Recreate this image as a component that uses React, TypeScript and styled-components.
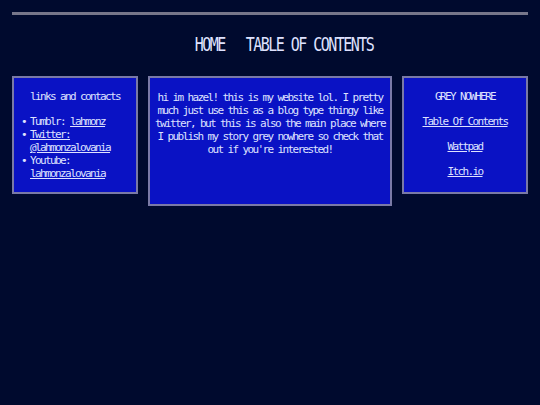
import styled, { createGlobalStyle } from "styled-components";

// 전체 페이지 기본 스타일
const GlobalStyle = createGlobalStyle`
  html, body {
    margin: 0;
    padding: 0;
    background-color: #000a2e;
  }
  body {
    font-family: "DejaVu Sans Mono", "Liberation Mono", monospace;
    color: #dfe2ff;
  }
  a {
    color: #dfe2ff;
  }
`;

const contacts = [
  { label: "Tumblr:", link: "lahmonz", inline: true },
  { label: "", link: "Twitter: @lahmonzalovania", inline: false },
  { label: "Youtube:", link: "lahmonzalovania", inline: false },
];

const storyLinks = ["Table Of Contents", "Wattpad", "Itch.io"];

const App = () => {
  return (
    <Page>
      <GlobalStyle />
      <TopBar />
      <Nav>
        <NavLink href="#">HOME</NavLink>
        <NavLink href="#">TABLE OF CONTENTS</NavLink>
      </Nav>
      <Columns>
        <SideBox>
          <BoxTitle>links and contacts</BoxTitle>
          <ContactList>
            {contacts.map((c, i) => (
              <ContactItem key={i}>
                {c.label && (c.inline ? `${c.label} ` : c.label)}
                {c.label && !c.inline && <br />}
                <TextLink href="#">{c.link}</TextLink>
              </ContactItem>
            ))}
          </ContactList>
        </SideBox>
        <MainBox>
          <Intro>
            hi im hazel! this is my website lol. I pretty much just use this as
            a blog type thingy like twitter, but this is also the main place
            where I publish my story grey nowhere so check that out if you're
            interested!
          </Intro>
        </MainBox>
        <SideBox>
          <BoxTitle>GREY NOWHERE</BoxTitle>
          {storyLinks.map((s) => (
            <StoryLink key={s} href="#">
              {s}
            </StoryLink>
          ))}
        </SideBox>
      </Columns>
    </Page>
  );
};

const Page = styled.div`
  padding: 12px;
`;

// 상단 회색 줄
const TopBar = styled.div`
  height: 3px;
  background-color: #76768a;
`;

const Nav = styled.nav`
  display: flex;
  justify-content: center;
  gap: 21px;
  padding: 21px 0 0 28px;
  height: 41px;
  box-sizing: border-box;
`;

// 글자가 세로로 긴 폰트 느낌을 내기 위해 scaleY
const NavLink = styled.a`
  display: inline-block;
  font-size: 15px;
  line-height: 18px;
  letter-spacing: -1.53px;
  text-decoration: none;
  color: #dfe2ff;
  transform: scaleY(1.25);
`;

const Columns = styled.div`
  display: flex;
  gap: 10px;
  align-items: flex-start;
  margin-top: 20px;
`;

const Box = styled.div`
  box-sizing: border-box;
  background-color: #0a12c4;
  border: 2px solid #7a7aa6;
  font-size: 11px;
  line-height: 13px;
  letter-spacing: -1.62px;
`;

const SideBox = styled(Box)`
  width: 126px;
  height: 118px;
  padding-top: 12px;
  display: flex;
  flex-direction: column;
  align-items: center;
`;

const MainBox = styled(Box)`
  width: 244px;
  height: 130px;
  padding: 13px 2px 0;
`;

const BoxTitle = styled.div`
  text-align: center;
`;

const ContactList = styled.ul`
  align-self: stretch;
  margin: 12px 0 0;
  padding-left: 16px;
  list-style: none;
`;

const ContactItem = styled.li`
  &::before {
    content: "•";
    display: inline-block;
    width: 9px;
    margin-left: -9px;
    letter-spacing: 0;
  }
`;

const TextLink = styled.a`
  color: #dfe2ff;
`;

const StoryLink = styled.a`
  margin-top: 12px;
  color: #dfe2ff;
`;

const Intro = styled.p`
  margin: 0;
  text-align: center;
`;

export default App;
